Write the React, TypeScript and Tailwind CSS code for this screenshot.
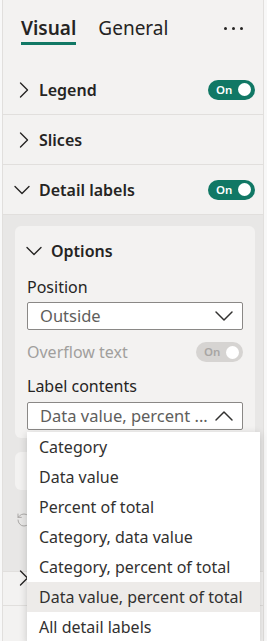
import { ChevronDown, ChevronRight, ChevronUp, RotateCcw } from "lucide-react";

const font = "font-['Noto_Sans','Open_Sans',sans-serif]";

function Toggle({ disabled = false }: { disabled?: boolean }) {
  return (
    <div
      className={`flex h-[20px] w-[47px] items-center justify-between rounded-full pl-[8px] pr-[4px] ${
        disabled ? "bg-[#d6d4d2]" : "bg-[#117865]"
      }`}
    >
      <span className={`text-[11.5px] font-semibold leading-none ${disabled ? "text-[#a8a6a4]" : "text-white"}`}>On</span>
      <span className="h-[13px] w-[13px] rounded-full bg-white" />
    </div>
  );
}

function SectionRow({ label, open = false, toggle = false }: { label: string; open?: boolean; toggle?: boolean }) {
  return (
    <div className="flex h-[50px] items-center justify-between border-b border-[#e1dfdd] pr-[8px]">
      <div className={`flex items-center ${open ? "pl-[5px]" : "pl-[7px]"}`}>
        {open ? (
          <ChevronDown size={28} className="text-[#252423]" strokeWidth={1.2} />
        ) : (
          <ChevronRight size={28} className="text-[#252423]" strokeWidth={1.2} />
        )}
        <span className={`text-[16px] font-semibold text-[#252423] ${open ? "ml-[3px]" : "ml-[1px]"}`}>{label}</span>
      </div>
      {toggle && <Toggle />}
    </div>
  );
}

function Select({ value, open = false }: { value: string; open?: boolean }) {
  return (
    <div className="flex h-[28px] items-center justify-between rounded-[2px] border border-[#8a8886] bg-white pl-[12px] pr-[2px]">
      <span className="whitespace-nowrap text-[16.5px] leading-none text-[#605e5c]">{value}</span>
      {open ? (
        <ChevronUp size={32} className="text-[#323130]" strokeWidth={1.1} />
      ) : (
        <ChevronDown size={32} className="text-[#323130]" strokeWidth={1.1} />
      )}
    </div>
  );
}

const options = [
  "Category",
  "Data value",
  "Percent of total",
  "Category, data value",
  "Category, percent of total",
  "Data value, percent of total",
  "All detail labels",
];

export default function App() {
  return (
    <div className={`relative h-[641px] w-[267px] overflow-hidden bg-[#f8f8f8] ${font}`}>
      <div className="ml-[2px] mr-[3px] h-full border-x border-[#e1dfdd] bg-[#f3f2f1]">
        {/* tabs */}
        <div className="flex h-[65px] items-start pl-[18px] pr-[20px] pt-[14px]">
          <div className="flex flex-col">
            <span className="text-[19px] font-semibold leading-[28px] text-[#252423]">Visual</span>
            <span className="h-[3px] w-[55px] bg-[#117865]" />
          </div>
          <span className="ml-[22px] text-[19px] leading-[28px] text-[#252423]">General</span>
          <div className="ml-auto mt-[13px] flex gap-[5px]">
            <span className="h-[3px] w-[3px] rounded-full bg-[#252423]" />
            <span className="h-[3px] w-[3px] rounded-full bg-[#252423]" />
            <span className="h-[3px] w-[3px] rounded-full bg-[#252423]" />
          </div>
        </div>

        <SectionRow label="Legend" toggle />
        <SectionRow label="Slices" />
        <SectionRow label="Detail labels" open toggle />

        {/* expanded section */}
        <div className="h-[357px] border-b border-[#e1dfdd] bg-[#e8e7e6] pt-[11px]">
          <div className="ml-[12px] w-[240px] rounded-[6px] bg-[#f3f2f1] px-[12px] pb-[8px]">
            <div className="flex h-[46px] items-center pt-[4px]">
              <ChevronDown size={28} className="-ml-[7px] text-[#252423]" strokeWidth={1.2} />
              <span className="ml-[3px] text-[16px] font-semibold text-[#252423]">Options</span>
            </div>
            <div className="flex h-[29px] items-center text-[16px] text-[#252423]">Position</div>
            <div className="mt-[1px]">
              <Select value="Outside" />
            </div>
            <div className="mt-[8px] flex h-[28px] items-center justify-between">
              <span className="text-[16px] text-[#a19f9d]">Overflow text</span>
              <Toggle disabled />
            </div>
            <div className="mt-[6px] flex h-[28px] items-center text-[16px] text-[#252423]">Label contents</div>
            <div className="mt-[2px]">
              <Select value="Data value, percent ..." open />
            </div>
          </div>
          <div className="ml-[12px] mt-[14px] h-[38px] w-[240px] rounded-[6px] bg-[#f3f2f1]" />
          <div className="ml-[13px] mt-[22px]">
            <RotateCcw size={16} className="text-[#a19f9d]" strokeWidth={1.3} />
          </div>
        </div>

        <div className="h-[42px] border-b border-[#e1dfdd] pl-[7px]">
          <ChevronRight size={28} className="-mt-[8px] text-[#252423]" strokeWidth={1.2} />
        </div>
      </div>

      {/* dropdown menu */}
      <div className="absolute left-[27px] top-[432px] w-[233px] bg-white shadow-[0_2px_8px_rgba(0,0,0,0.18)]">
        {options.map((opt) => (
          <div
            key={opt}
            className={`flex h-[30px] items-center whitespace-nowrap px-[12px] text-[16px] text-[#323130] ${
              opt === "Data value, percent of total" ? "bg-[#edebe9]" : ""
            }`}
          >
            {opt}
          </div>
        ))}
      </div>
    </div>
  );
}
